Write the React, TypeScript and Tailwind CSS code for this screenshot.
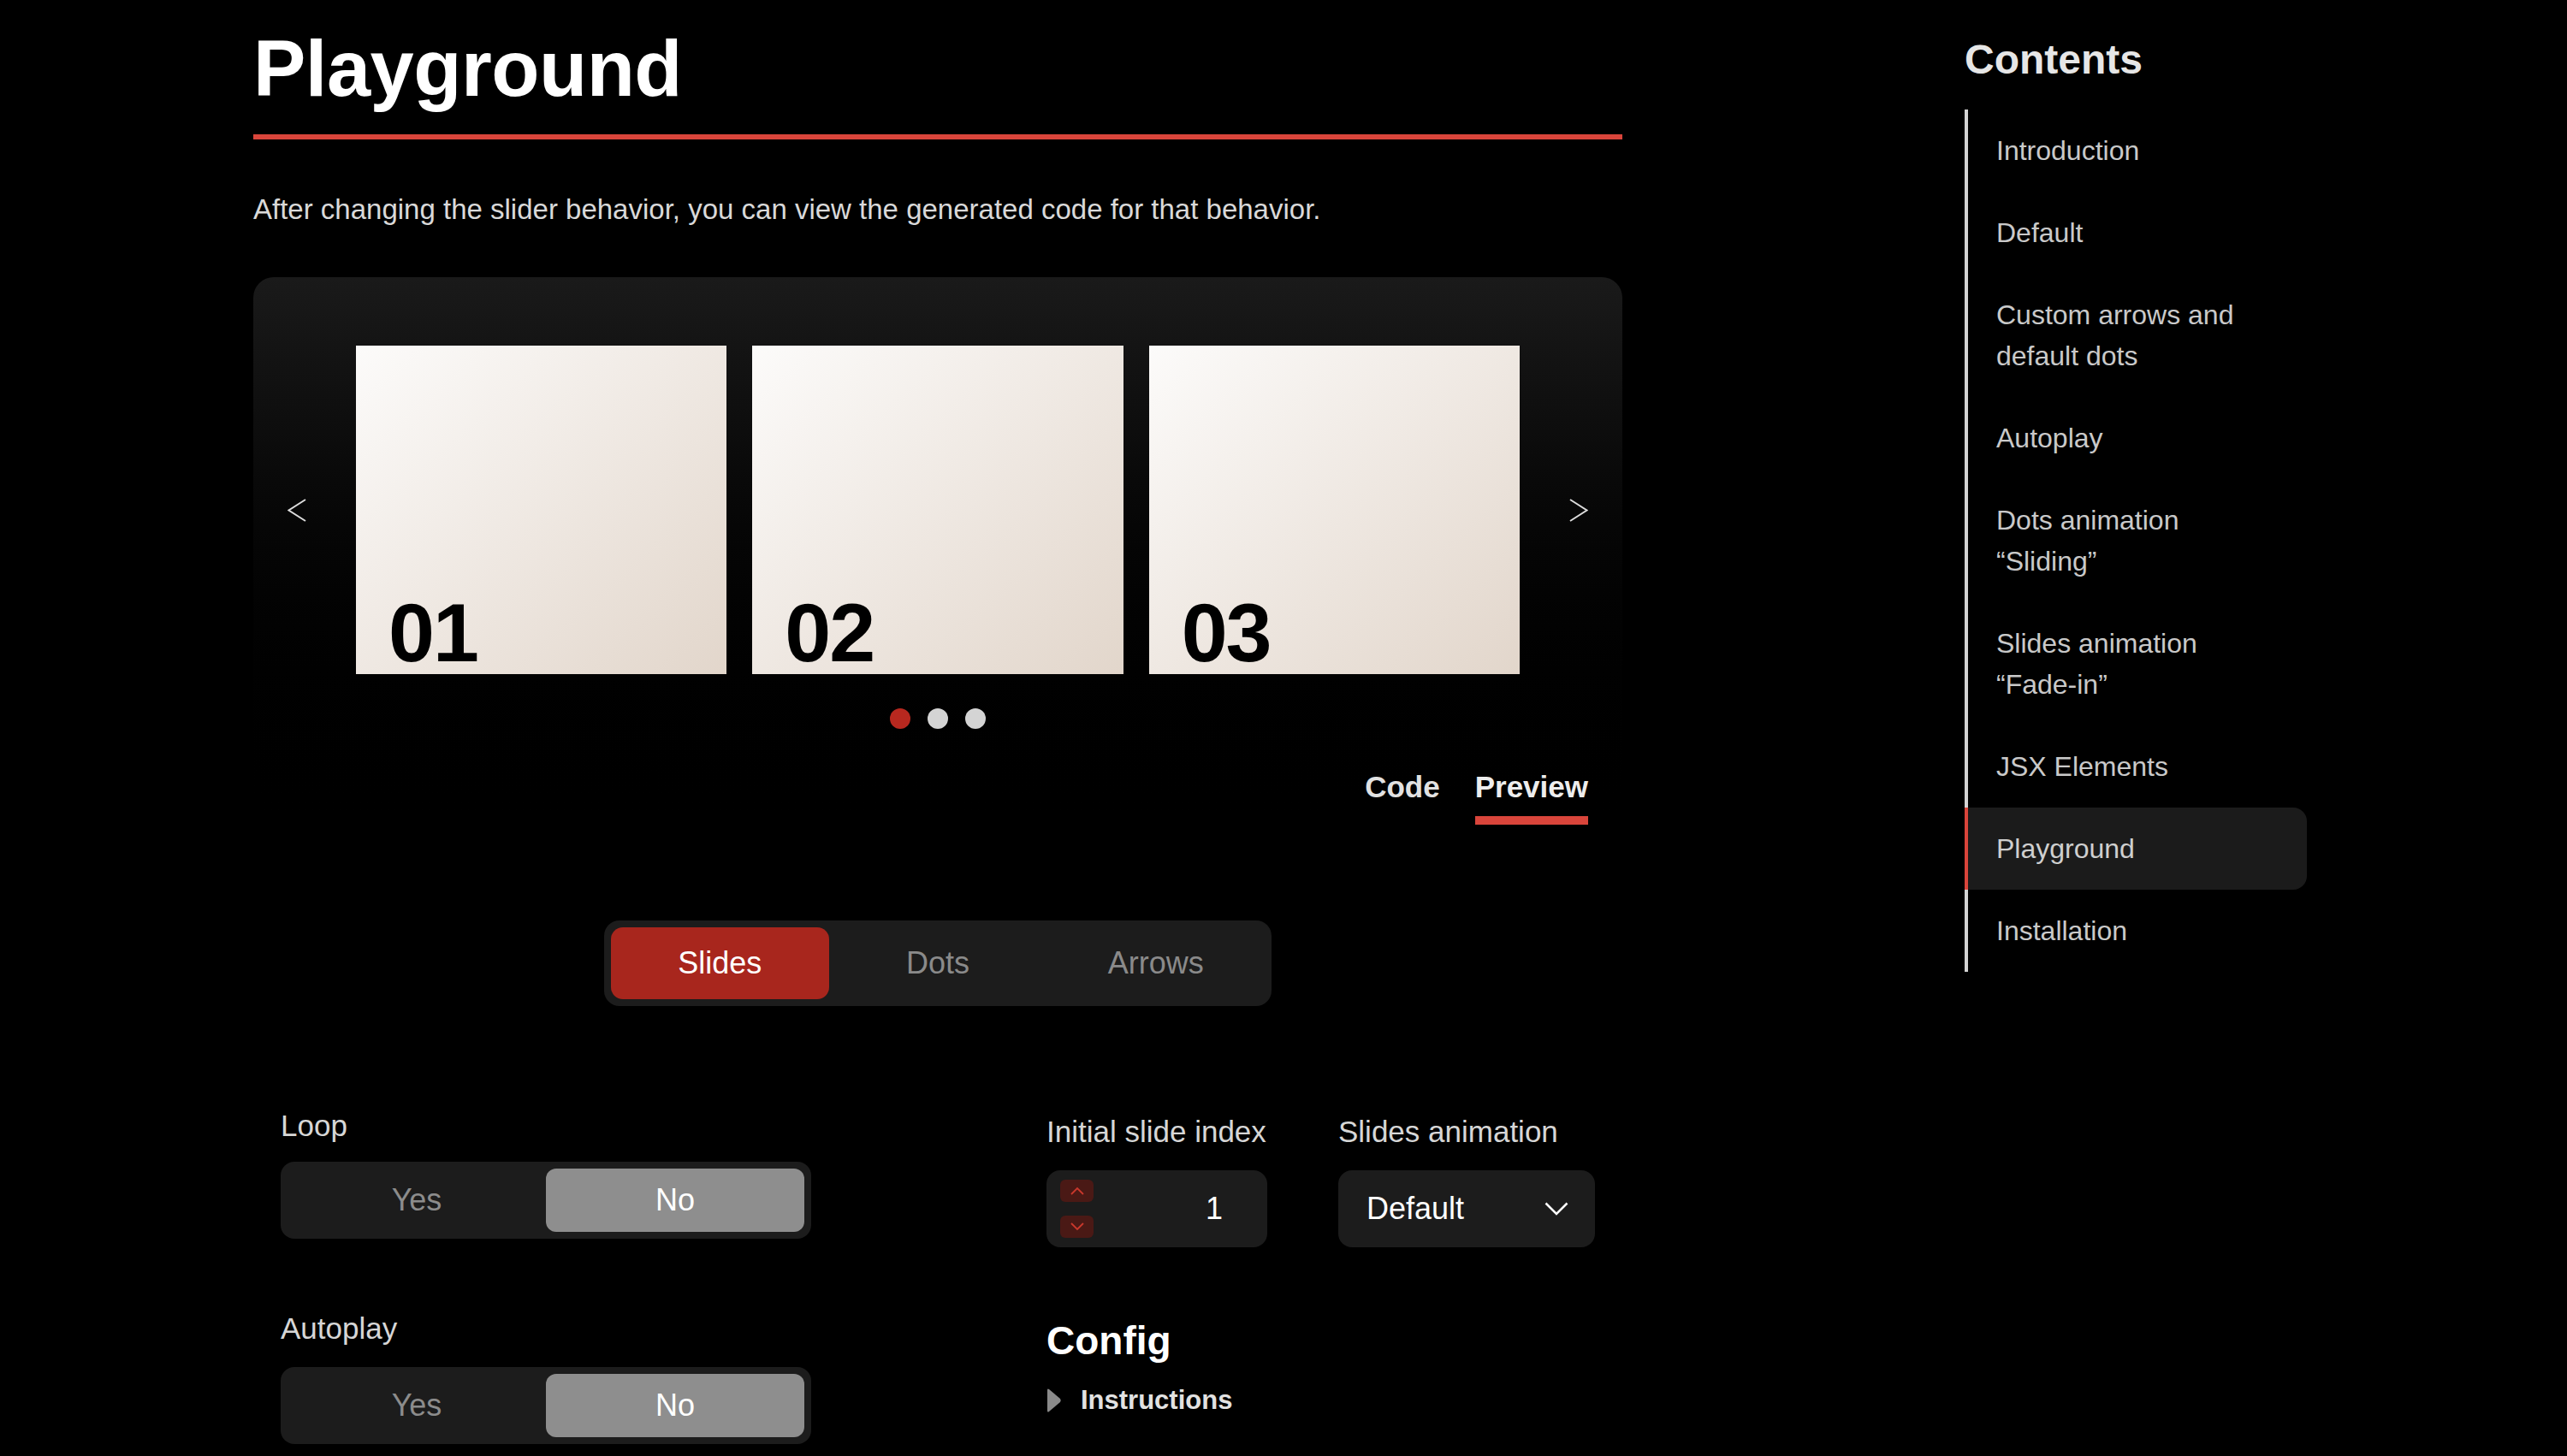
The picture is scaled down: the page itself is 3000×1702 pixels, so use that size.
const contents = [
  { label: ["Introduction"] },
  { label: ["Default"] },
  { label: ["Custom arrows and", "default dots"] },
  { label: ["Autoplay"] },
  { label: ["Dots animation", "“Sliding”"] },
  { label: ["Slides animation", "“Fade-in”"] },
  { label: ["JSX Elements"] },
  { label: ["Playground"], active: true },
  { label: ["Installation"] },
]

function Toggle({ value }: { value: "Yes" | "No" }) {
  return (
    <div className="grid grid-cols-2 w-[620px] h-[90px] p-[8px] rounded-[16px] bg-[#1c1c1c] text-[36px]">
      {["Yes", "No"].map((opt) => (
        <div
          key={opt}
          className={
            opt === value
              ? "flex items-center justify-center rounded-[12px] bg-[#8e8e8e] text-white"
              : "flex items-center justify-center text-[#8c8c8c]"
          }
        >
          {opt}
        </div>
      ))}
    </div>
  )
}

function Arrow({ dir }: { dir: "left" | "right" }) {
  return (
    <svg width="22" height="27" viewBox="0 0 22 27" fill="none">
      <polyline
        points={dir === "left" ? "21,1 1.5,13.5 21,26" : "1,1 20.5,13.5 1,26"}
        stroke="#dcdcdc"
        strokeWidth="2"
        strokeLinejoin="miter"
      />
    </svg>
  )
}

export default function App() {
  return (
    <div className="flex h-[1702px] overflow-hidden bg-black font-['Liberation_Sans',Arial,sans-serif]">
      <main className="ml-[296px] w-[1600px] flex flex-col">
        <h1 className="mt-[34px] text-[92px] leading-[92px] font-bold text-white tracking-[-0.5px]">
          Playground
        </h1>
        <div className="mt-[31px] h-[6px] bg-[#d9453b]" />
        <p className="mt-[65px] text-[33px] leading-[33px] text-[#d9d9d9]">
          After changing the slider behavior, you can view the generated code for that behavior.
        </p>

        {/* preview card */}
        <section className="mt-[63px] rounded-[24px] bg-gradient-to-b from-[#1a1a1a] to-black pt-[80px] pb-[26px]">
          <div className="flex items-center px-[40px]">
            <Arrow dir="left" />
            <div className="flex-1 mx-[58px] flex gap-[30px]">
              {["01", "02", "03"].map((n) => (
                <div
                  key={n}
                  className="flex-1 h-[384px] flex items-end pl-[38px] bg-gradient-to-br from-[#fcfbfa] to-[#e2d6cb]"
                >
                  <span className="text-[97px] leading-[96px] font-bold text-black tracking-[-2px]">{n}</span>
                </div>
              ))}
            </div>
            <Arrow dir="right" />
          </div>

          <div className="mt-[40px] flex justify-center gap-[20px]">
            <span className="w-[24px] h-[24px] rounded-full bg-[#b8281f]" />
            <span className="w-[24px] h-[24px] rounded-full bg-[#d4d4d4]" />
            <span className="w-[24px] h-[24px] rounded-full bg-[#d4d4d4]" />
          </div>

          <div className="mt-[50px] flex justify-end gap-[41px] pr-[40px] text-[35px] leading-[35px] font-semibold">
            <div className="text-[#e2e2e2]">Code</div>
            <div className="flex flex-col">
              <span className="text-[#ededed]">Preview</span>
              <span className="mt-[17px] h-[10px] bg-[#d9453b]" />
            </div>
          </div>
        </section>

        {/* tabs */}
        <div className="mt-[86px] self-center grid grid-cols-3 w-[780px] h-[100px] p-[8px] rounded-[18px] bg-[#1c1c1c] text-[36px]">
          <div className="flex items-center justify-center rounded-[14px] bg-[#a8261d] text-white">Slides</div>
          <div className="flex items-center justify-center text-[#8a8a8a]">Dots</div>
          <div className="flex items-center justify-center text-[#8a8a8a]">Arrows</div>
        </div>

        {/* controls */}
        <div className="mt-[122px] px-[32px] flex justify-between">
          <div className="flex flex-col">
            <div className="text-[35px] leading-[35px] text-[#d6d6d6]">Loop</div>
            <div className="mt-[25px]">
              <Toggle value="No" />
            </div>
            <div className="mt-[87px] text-[35px] leading-[35px] text-[#d6d6d6]">Autoplay</div>
            <div className="mt-[28px]">
              <Toggle value="No" />
            </div>
          </div>

          <div className="w-[641px] mt-[7px] flex flex-col">
            <div className="flex justify-between">
              <div className="flex flex-col">
                <div className="text-[35px] leading-[35px] text-[#d6d6d6] whitespace-nowrap">Initial slide index</div>
                <div className="mt-[28px] w-[258px] h-[90px] rounded-[16px] bg-[#1c1c1c] flex items-center pl-[16px]">
                  <div className="flex flex-col gap-[16px]">
                    <span className="w-[39px] h-[26px] rounded-[6px] bg-[#4a1915] flex items-center justify-center">
                      <svg width="16" height="10" viewBox="0 0 16 10" fill="none">
                        <polyline points="1,9 8,2 15,9" stroke="#c9382c" strokeWidth="1.8" />
                      </svg>
                    </span>
                    <span className="w-[39px] h-[26px] rounded-[6px] bg-[#4a1915] flex items-center justify-center">
                      <svg width="16" height="10" viewBox="0 0 16 10" fill="none">
                        <polyline points="1,1 8,8 15,1" stroke="#c9382c" strokeWidth="1.8" />
                      </svg>
                    </span>
                  </div>
                  <span className="flex-1 text-right pr-[52px] text-[36px] text-white">1</span>
                </div>
              </div>
              <div className="flex flex-col">
                <div className="text-[35px] leading-[35px] text-[#d6d6d6] whitespace-nowrap">Slides animation</div>
                <div className="mt-[28px] w-[300px] h-[90px] rounded-[16px] bg-[#1c1c1c] flex items-center justify-between pl-[33px] pr-[31px]">
                  <span className="text-[36px] text-white">Default</span>
                  <svg width="28" height="16" viewBox="0 0 28 16" fill="none">
                    <polyline points="1.5,1.5 14,14 26.5,1.5" stroke="#ffffff" strokeWidth="2.5" />
                  </svg>
                </div>
              </div>
            </div>

            <h2 className="mt-[86px] text-[46px] leading-[46px] font-bold text-white">Config</h2>
            <div className="mt-[31px] flex items-center gap-[22px]">
              <svg width="18" height="30" viewBox="0 0 18 30">
                <path d="M3 2 L16 13 Q17.5 15 16 17 L3 28 Q1 29.5 1 27 L1 3 Q1 0.5 3 2 Z" fill="#8a8a8a" />
              </svg>
              <span className="text-[31px] leading-[31px] font-semibold text-[#e2e2e2]">Instructions</span>
            </div>
          </div>
        </div>
      </main>

      <aside className="ml-[400px] w-[400px] flex flex-col">
        <h2 className="mt-[46px] text-[48px] leading-[48px] font-bold text-[#e6e6e6]">Contents</h2>
        <ul className="mt-[34px] flex flex-col">
          {contents.map((item) => (
            <li
              key={item.label.join(" ")}
              className={
                item.active
                  ? "border-l-4 border-[#d9453b] bg-[#1b1b1b] rounded-r-[16px] py-[24px] pl-[33px] text-[32px] leading-[48px] text-[#cfcfcf]"
                  : "border-l-4 border-[#d4d4d4] py-[24px] pl-[33px] text-[32px] leading-[48px] text-[#c9c9c9]"
              }
            >
              {item.label.map((line) => (
                <div key={line}>{line}</div>
              ))}
            </li>
          ))}
        </ul>
      </aside>
    </div>
  )
}
